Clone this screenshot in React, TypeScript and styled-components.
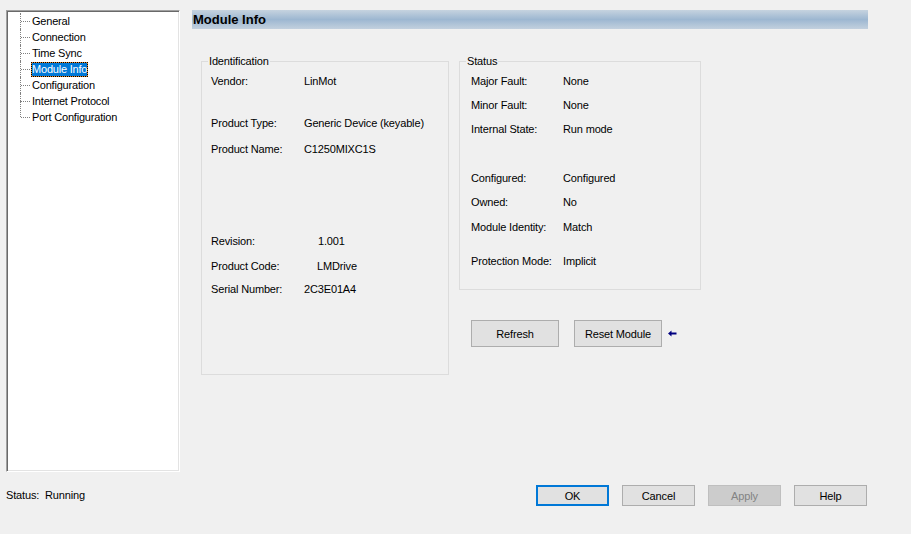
import React from 'react';
import styled, { createGlobalStyle } from 'styled-components';

const GlobalStyle = createGlobalStyle`
  html, body {
    margin: 0;
    padding: 0;
    background: #f0f0f0;
  }
  body {
    font-family: "Liberation Sans", Arial, sans-serif;
    font-size: 11px;
    letter-spacing: -0.15px;
    color: #000;
  }
`;

const Window = styled.div`
  width: 911px;
  height: 534px;
  display: grid;
  grid-template-rows: 1fr auto;
  background: #f0f0f0;
  box-sizing: border-box;
  overflow: hidden;
`;

const Body = styled.div`
  display: flex;
  padding: 10px 0 0 6px;
`;

const TreePanel = styled.div`
  width: 174px;
  height: 462px;
  box-sizing: border-box;
  background: #fff;
  border: 1px solid;
  border-color: #a0a0a0 #fff #fff #a0a0a0;
  box-shadow: inset 1px 1px 0 #696969, inset -1px -1px 0 #e3e3e3;
  padding: 2px 0 0 0;
`;

const TreeList = styled.ul`
  list-style: none;
  margin: 0;
  padding: 0 0 0 13px;
`;

const TreeItem = styled.li<{ $last?: boolean }>`
  position: relative;
  height: 16px;
  display: flex;
  align-items: center;
  padding-left: 11px;

  &::before {
    content: '';
    position: absolute;
    left: 0;
    top: ${({ $last }) => ($last ? '-8px' : '0')};
    height: 16px;
    border-left: 1px dotted #808080;
  }

  &::after {
    content: '';
    position: absolute;
    left: 1px;
    top: 8px;
    width: 9px;
    border-top: 1px dotted #808080;
  }
`;

const TreeLabel = styled.span<{ $selected?: boolean }>`
  padding: 0 1px;
  line-height: 15px;
  height: 15px;
  background: ${({ $selected }) => ($selected ? '#0078d7' : 'transparent')};
  color: ${({ $selected }) => ($selected ? '#fff' : '#000')};
  outline: ${({ $selected }) => ($selected ? '1px dotted #000' : 'none')};
  outline-offset: -1px;
  box-shadow: ${({ $selected }) => ($selected ? 'inset 0 0 0 1px #e88a2a' : 'none')};
  font-size: 11px;
  letter-spacing: -0.2px;
`;

const Content = styled.div`
  margin-left: 12px;
  width: 676px;
  display: flex;
  flex-direction: column;
`;

const HeaderBar = styled.div`
  height: 19px;
  display: flex;
  align-items: center;
  padding-left: 1px;
  font-size: 13px;
  font-weight: bold;
  letter-spacing: 0;
  background: linear-gradient(to bottom, #c6d3df 0%, #9db7d1 50%, #c2d0de 100%);
`;

const Panels = styled.div`
  display: flex;
  align-items: flex-start;
  gap: 10px;
  margin-top: 32px;
  padding-left: 9px;
`;

const Column = styled.div`
  display: flex;
  flex-direction: column;
`;

const Group = styled.div<{ $width: number; $height: number; $pad: number }>`
  width: ${({ $width }) => $width}px;
  height: ${({ $height }) => $height}px;
  box-sizing: border-box;
  border: 1px solid #dcdcdc;
  padding-left: ${({ $pad }) => $pad}px;
  display: flex;
  flex-direction: column;
`;

const Caption = styled.div<{ $offset: number }>`
  align-self: flex-start;
  margin-top: -8px;
  margin-left: ${({ $offset }) => $offset}px;
  padding: 0 1px;
  line-height: 14px;
  background: #f0f0f0;
  font-size: 11px;
`;

const Row = styled.div<{ $gap: number; $labelWidth: number; $indent?: number }>`
  display: flex;
  margin-top: ${({ $gap }) => $gap}px;
  line-height: 14px;
  height: 14px;

  & > span:first-child {
    width: ${({ $labelWidth, $indent }) => $labelWidth + ($indent || 0)}px;
    flex: none;
  }
`;

const ActionRow = styled.div`
  display: flex;
  align-items: center;
  gap: 15px;
  margin-top: 30px;
  padding-left: 12px;
`;

const Button = styled.button<{ $width: number; $height: number; $default?: boolean }>`
  width: ${({ $width }) => $width}px;
  height: ${({ $height }) => $height}px;
  box-sizing: border-box;
  font-family: "Liberation Sans", Arial, sans-serif;
  font-size: 11px;
  letter-spacing: -0.15px;
  color: #000;
  background: #e1e1e1;
  border: ${({ $default }) => ($default ? '2px solid #0078d7' : '1px solid #adadad')};
  padding: 0;
  margin: 0;

  &:disabled {
    background: #cccccc;
    border-color: #bfbfbf;
    color: #838383;
  }
`;

const ArrowMark = styled.svg`
  margin-left: -9px;
  flex: none;
`;

const Footer = styled.div`
  display: flex;
  align-items: center;
  justify-content: space-between;
  padding: 13px 44px 29px 6px;
`;

const StatusText = styled.div`
  font-size: 11px;
  white-space: pre;
  margin-top: -1px;
`;

const FooterButtons = styled.div`
  display: flex;
  gap: 13px;
`;

const treeItems = [
  'General',
  'Connection',
  'Time Sync',
  'Module Info',
  'Configuration',
  'Internet Protocol',
  'Port Configuration',
];

const identRows: { label: string; value: string; gap: number; indent?: number }[] = [
  { label: 'Vendor:', value: 'LinMot', gap: 6 },
  { label: 'Product Type:', value: 'Generic Device (keyable)', gap: 28 },
  { label: 'Product Name:', value: 'C1250MIXC1S', gap: 12 },
  { label: 'Revision:', value: '1.001', gap: 78, indent: 14 },
  { label: 'Product Code:', value: 'LMDrive', gap: 11, indent: 13 },
  { label: 'Serial Number:', value: '2C3E01A4', gap: 9 },
];

const statusRows = [
  { label: 'Major Fault:', value: 'None', gap: 6 },
  { label: 'Minor Fault:', value: 'None', gap: 10 },
  { label: 'Internal State:', value: 'Run mode', gap: 10 },
  { label: 'Configured:', value: 'Configured', gap: 35 },
  { label: 'Owned:', value: 'No', gap: 10 },
  { label: 'Module Identity:', value: 'Match', gap: 11 },
  { label: 'Protection Mode:', value: 'Implicit', gap: 20 },
];

const App = () => {
  return (
    <Window>
      <GlobalStyle />
      <Body>
        <TreePanel>
          <TreeList>
            {treeItems.map((item, i) => (
              <TreeItem key={item} $last={i === treeItems.length - 1}>
                <TreeLabel $selected={item === 'Module Info'}>{item}</TreeLabel>
              </TreeItem>
            ))}
          </TreeList>
        </TreePanel>
        <Content>
          <HeaderBar>Module Info</HeaderBar>
          <Panels>
            <Group $width={248} $height={314} $pad={9}>
              <Caption $offset={-3}>Identification</Caption>
              {identRows.map((r) => (
                <Row key={r.label} $gap={r.gap} $labelWidth={93} $indent={r.indent}>
                  <span>{r.label}</span>
                  <span>{r.value}</span>
                </Row>
              ))}
            </Group>
            <Column>
              <Group $width={242} $height={229} $pad={11}>
                <Caption $offset={-5}>Status</Caption>
                {statusRows.map((r) => (
                  <Row key={r.label} $gap={r.gap} $labelWidth={92}>
                    <span>{r.label}</span>
                    <span>{r.value}</span>
                  </Row>
                ))}
              </Group>
              <ActionRow>
                <Button $width={88} $height={27}>Refresh</Button>
                <Button $width={88} $height={27}>Reset Module</Button>
                <ArrowMark width="9" height="7" viewBox="0 0 9 7">
                  <path d="M0 3.5 L3.5 0.5 L3.5 2.5 L8.5 2.5 L8.5 4.5 L3.5 4.5 L3.5 6.5 Z" fill="#000080" />
                </ArrowMark>
              </ActionRow>
            </Column>
          </Panels>
        </Content>
      </Body>
      <Footer>
        <StatusText>{'Status:  Running'}</StatusText>
        <FooterButtons>
          <Button $width={73} $height={21} $default>OK</Button>
          <Button $width={73} $height={21}>Cancel</Button>
          <Button $width={73} $height={21} disabled>Apply</Button>
          <Button $width={73} $height={21}>Help</Button>
        </FooterButtons>
      </Footer>
    </Window>
  );
};

export default App;
